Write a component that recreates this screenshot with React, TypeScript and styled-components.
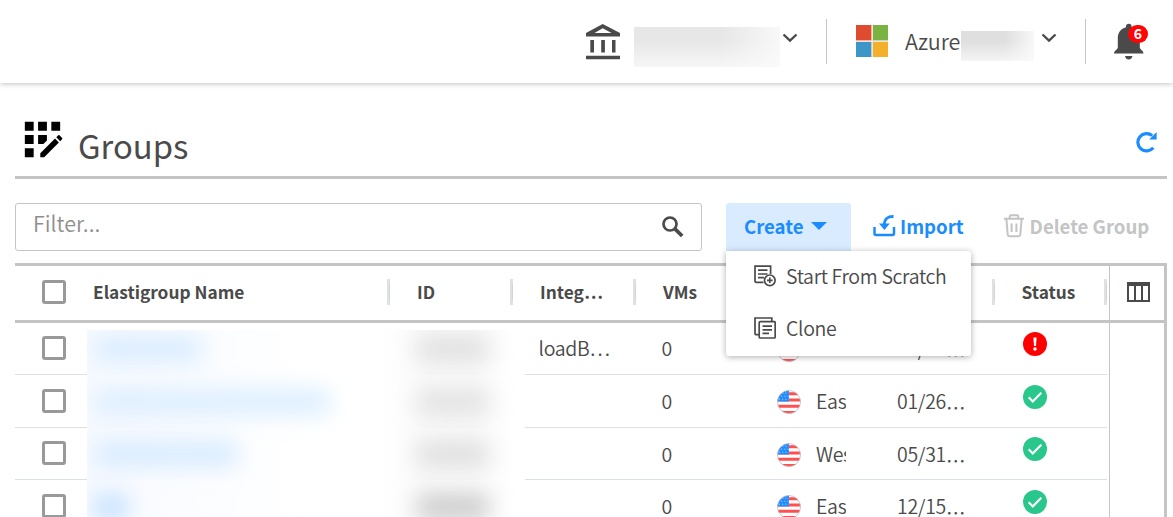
import React from 'react';
import styled, { createGlobalStyle } from 'styled-components';
import { MdAppRegistration } from 'react-icons/md';

const GlobalStyle = createGlobalStyle`
  * { box-sizing: border-box; }
  body {
    margin: 0;
    background: #fff;
    color: #4a4a4a;
    font-family: "Noto Sans CJK KR", "Noto Sans", sans-serif;
    overflow: hidden;
  }
  svg { display: block; flex: none; }
`;

const Page = styled.div`
  width: 1173px;
  height: 517px;
  overflow: hidden;
  display: flex;
  flex-direction: column;
`;

const TopBar = styled.header`
  flex: none;
  height: 83px;
  padding-right: 25px;
  display: flex;
  justify-content: flex-end;
  align-items: flex-start;
  box-shadow: 0 1px 5px rgba(0, 0, 0, 0.24);
`;

const Organization = styled.div`
  display: flex;
  padding-top: 24px;
  width: 240px;
`;

const Account = styled.div`
  display: flex;
  width: 258px;
  padding: 25px 0 0 29px;
`;

const AccountName = styled.span`
  font-size: 21.5px;
  font-weight: 350;
  line-height: 30px;
  width: 56px;
  margin: 1px 0 0 17px;
  white-space: nowrap;
`;

const HiddenName = styled.span<{ $w: number; $h: number; $ml: number; $mt: number; $tone: string }>`
  flex: none;
  width: ${p => p.$w}px;
  height: ${p => p.$h}px;
  margin: ${p => p.$mt}px 0 0 ${p => p.$ml}px;
  background: linear-gradient(to bottom, transparent 35%, rgba(250, 250, 250, 0.8)),
    linear-gradient(to right, ${p => p.$tone} 60%, #f8f8f8);
`;

const ChevronBox = styled.span<{ $ml: number; $mt: number }>`
  margin: ${p => p.$mt}px 0 0 ${p => p.$ml}px;
`;

const Divider = styled.div`
  width: 1px;
  height: 45px;
  margin-top: 19px;
  background: #c4c4c4;
`;

const Notifications = styled.div`
  position: relative;
  padding-top: 23px;
  margin-left: 28px;
  width: 34px;
`;

const Badge = styled.span`
  position: absolute;
  left: 14px;
  top: 25px;
  width: 20px;
  height: 18px;
  border-radius: 9px;
  background: #ff0505;
  color: #fff;
  font-size: 14px;
  font-weight: 700;
  line-height: 17px;
  text-align: center;
`;

const Content = styled.main`
  flex: 1;
  padding: 37px 6px 0 15px;
  display: flex;
  flex-direction: column;
`;

const TitleBar = styled.div`
  flex: none;
  height: 59px;
  border-bottom: 3px solid #c4c4c4;
  display: flex;
  align-items: flex-start;
  padding: 0 9px 0 1px;
`;

const TitleIcon = styled.span`
  color: #000;
  margin-top: -7px;
  width: 53px;
`;

const Title = styled.h1`
  flex: 1;
  margin: 1px 0 0 9px;
  font-size: 32.8px;
  font-weight: 400;
  line-height: 48px;
`;

const RefreshBox = styled.span`
  margin-top: 11px;
`;

const Toolbar = styled.div`
  flex: none;
  display: flex;
  margin-top: 24px;
  height: 48px;
`;

const Filter = styled.div`
  width: 687px;
  border: 1px solid #c4c4c4;
  border-radius: 3px;
  display: flex;
  justify-content: space-between;
  padding: 0 17px;
  color: #8f8f8f;
  font-size: 21.5px;
  font-weight: 350;
  line-height: 37px;
`;

const SearchBox = styled.span`
  padding-top: 12px;
`;

const CreateMenu = styled.div`
  position: relative;
  width: 125px;
  margin-left: 24px;
`;

const Action = styled.button<{ $color: string; $active?: boolean; $pl?: number; $gap: number }>`
  width: ${p => (p.$active ? '100%' : 'auto')};
  height: 48px;
  border: 0;
  padding: 0 0 2px ${p => p.$pl ?? 0}px;
  border-radius: 3px 3px 0 0;
  display: flex;
  align-items: center;
  gap: ${p => p.$gap}px;
  background: ${p => (p.$active ? '#d9ecff' : 'transparent')};
  color: ${p => p.$color};
  font: 700 18.6px/30px "Noto Sans CJK KR", sans-serif;
  white-space: nowrap;
`;

const Dropdown = styled.div`
  position: absolute;
  z-index: 2;
  left: 0;
  top: 48px;
  width: 245px;
  height: 105px;
  background: #fff;
  border-radius: 0 3px 3px 3px;
  box-shadow: 0 1px 6px rgba(0, 0, 0, 0.32);
`;

const MenuItem = styled.div`
  height: 52px;
  padding: 0 0 3px 28px;
  display: flex;
  align-items: center;
  gap: 10px;
  font-size: 19.5px;
  font-weight: 350;
  line-height: 30px;
  letter-spacing: -0.33px;
  white-space: nowrap;
`;

const Table = styled.section`
  flex: none;
  margin-top: 12px;
  width: 1152px;
  border-top: 3px solid #c4c4c4;
  border-right: 3px solid #c4c4c4;
`;

const TableHead = styled.div`
  display: flex;
  height: 57px;
  border-bottom: 3px solid #c4c4c4;
`;

const HeadCell = styled.div<{ $w: number; $pl: number; $handle?: boolean }>`
  flex: none;
  width: ${p => p.$w}px;
  padding: 0 0 ${p => (p.$handle ? 0 : 2)}px ${p => p.$pl}px;
  display: flex;
  align-items: center;
  justify-content: space-between;
  font-size: 17.3px;
  font-weight: 700;
  line-height: 26px;
  white-space: nowrap;
  &::after {
    content: '';
    display: ${p => (p.$handle ? 'block' : 'none')};
    width: 3px;
    height: 26px;
    margin: 0 0 2px auto;
    background: linear-gradient(#d2d5d9, #d2d5d9) 2px 5px / 1px 16px no-repeat, #e0e1e3;
  }
`;

const HeadText = styled.span`
  padding-bottom: 3px;
`;

const ColumnPicker = styled.div`
  flex: 1;
  margin-left: 2px;
  border-left: 1px solid #c4c4c4;
  padding: 16px 0 0 17px;
`;

const TableBody = styled.div`
  display: flex;
  height: 211px;
`;

const SideColumn = styled.div`
  flex: 1;
  margin-left: 2px;
  border-left: 1px solid #c4c4c4;
`;

const Row = styled.div<{ $h: number }>`
  display: flex;
  height: ${p => p.$h}px;
`;

const Cell = styled.div<{ $w: number; $pl: number; $pb?: number }>`
  flex: none;
  width: ${p => p.$w}px;
  padding: 0 0 ${p => p.$pb ?? 0}px ${p => p.$pl}px;
  display: flex;
  align-items: center;
  border-bottom: 1px solid #dcdfe9;
  font-size: 19.5px;
  font-weight: 350;
  line-height: 30px;
  letter-spacing: -0.3px;
  white-space: nowrap;
`;

const CheckBox = styled.span`
  width: 24px;
  height: 24px;
  border: 3px solid #999;
  border-radius: 3px;
`;

const FlagBox = styled.span`
  margin-top: 2px;
`;

const RegionName = styled.span<{ $raise: number }>`
  margin: 0 0 ${p => p.$raise}px 15px;
  width: 30px;
  overflow: hidden;
`;

/* Brings the full-width ellipsis after digits down to the baseline. */
const Ellipsis = styled.span`
  vertical-align: -7px;
  line-height: 0;
`;

const HiddenCell = styled.div<{ $first: boolean }>`
  flex: none;
  width: 438px;
  display: flex;
  align-items: center;
  clip-path: inset(${p => (p.$first ? '7px' : '-24px')} 0 -24px 0);
  background: linear-gradient(to right, #f7faff, rgba(255, 255, 255, 0) 50%),
    linear-gradient(to right, transparent 67%, #fafafa 77%, #fafafa 88%, transparent 98%);
`;

const Smudge = styled.span<{ $w: number; $ml: number; $color: string }>`
  flex: none;
  width: ${p => p.$w}px;
  height: 26px;
  margin-left: ${p => p.$ml}px;
  border-radius: 8px;
  background: ${p => p.$color};
  filter: blur(11px);
`;

const Chevron = () => (
  <svg width="16" height="10" viewBox="0 0 16 10">
    <path d="M1.500 1.500 8 7.700l6.500-6.200" fill="none" stroke="#4a4a4a" strokeWidth="2.300" />
  </svg>
);

const BankIcon = () => (
  <svg width="34" height="36" viewBox="0 0 34 36" fill="#4a4a4a">
    <path fillRule="evenodd" d="M0 12.500V9L16.700 0 34 9v3.500ZM8.500 9h17L16.700 4.300Z" />
    <path d="M4.300 16h3.700v12.500H4.300ZM15.200 16h3.700v12.500h-3.700ZM26 16h3.500v12.500H26ZM0 31.800h34v3.400H0Z" />
  </svg>
);

const WindowsLogo = () => (
  <svg width="32" height="32" viewBox="0 0 32 32">
    <path fill="#f4e3dc" d="M0 0h32v32H0Z" />
    <path fill="#df4b2e" d="M0 0h15.300v15.300H0Z" />
    <path fill="#79b342" d="M17 0h15v15.300H17Z" />
    <path fill="#3c96c7" d="M0 17h15.300v15H0Z" />
    <path fill="#f3b12b" d="M17 17h15v15H17Z" />
  </svg>
);

const BellIcon = () => (
  <svg width="30" height="38" viewBox="0 0 30 38" fill="#4a4a4a">
    <path d="M12 3.500a2.800 2.800 0 0 1 5.600 0v.7C23 5.600 25.800 10 25.800 15v9.500c0 2 3.700 3 3.700 6H0c0-3 3.800-4 3.800-6V15C3.800 10 6.600 5.600 12 4.200ZM11 33h7.500c-.5 2.300-2 3.600-3.800 3.600S11.500 35.300 11 33Z" />
  </svg>
);

const RefreshIcon = () => (
  <svg width="22" height="22" viewBox="0 0 22 22">
    <path d="M17.300 16.800A8.700 8.700 0 1 1 16.200 4.600" fill="none" stroke="#1a8cff" strokeWidth="3.200" />
    <path d="M20.600 1v7.600h-7.400Z" fill="#1a8cff" />
  </svg>
);

const SearchIcon = () => (
  <svg width="22" height="22" viewBox="0 0 22 22" fill="none" stroke="#4a4a4a">
    <circle cx="8" cy="8" r="6.500" strokeWidth="2.700" />
    <path d="m13.200 13.200 7 6.800" strokeWidth="3.800" />
  </svg>
);

const ImportIcon = () => (
  <svg width="23" height="22" viewBox="0 0 23 22">
    <path d="M1.500 12v6.500q0 1.500 1.500 1.500h16.500q1.500 0 1.500-1.500V12" fill="none" stroke="#1a8cff" strokeWidth="2.500" />
    <path d="M20.500 1.500C15 1.300 11.400 3.500 11.300 10" fill="none" stroke="#1a8cff" strokeWidth="2.800" />
    <path d="M6 8.500h10.800l-5.400 6.500Z" fill="#1a8cff" />
  </svg>
);

const TrashIcon = () => (
  <svg width="20" height="24" viewBox="0 0 20 24" fill="none" stroke="#c4c4c4" strokeWidth="2">
    <path d="M0 4.800h20M5.800 4.500V2.200q0-1 1-1h6.400q1 0 1 1v2.300M2.400 5l1.300 15.500q.2 1.800 2 1.800h8.600q1.800 0 2-1.800L17.600 5M7.600 9.500v8.500M12.400 9.500v8.500" />
  </svg>
);

const ScratchIcon = () => (
  <svg width="22" height="22" viewBox="0 0 22 22" fill="none" stroke="#4a4a4a" strokeWidth="1.700">
    <path d="M9.500 17.300H2.300q-1.300 0-1.300-1.300V1.200h15.600V9M4 5.200h9.500M4 9h9.500M4 12.700h6" />
    <circle cx="15.800" cy="15.300" r="5.300" />
    <path d="M15.800 12.500v5.600M13 15.300h5.600" />
  </svg>
);

const CloneIcon = () => (
  <svg width="22" height="22" viewBox="0 0 22 22" fill="none" stroke="#4a4a4a" strokeWidth="1.700">
    <path d="M5 17.700H2.300q-1.300 0-1.300-1.300V1h16.800v3.500" />
    <rect x="5.200" y="4.700" width="16" height="16.300" rx="1" />
    <path d="M8.500 9.200H18M8.500 12.800H18M8.500 16.400h6.500" />
  </svg>
);

const ColumnsIcon = () => (
  <svg width="23" height="20" viewBox="0 0 23 20">
    <path fill="#4a4a4a" fillRule="evenodd" d="M0 0h23v20H0ZM2 4v14h5V4ZM9 4v14h5V4ZM16 4v14h5V4Z" />
  </svg>
);

const FlagIcon = () => (
  <svg width="24" height="24" viewBox="0 0 24 24">
    <defs>
      <clipPath id="disc"><circle cx="12" cy="12" r="11.500" /></clipPath>
    </defs>
    <g clipPath="url(#disc)">
      <path fill="#fff" d="M0 0h24v24H0Z" />
      <path stroke="#ff5050" strokeWidth="2.900" d="M0 3.800h24M0 10h24M0 16.300h24M0 22.400h24" />
      <path fill="#1f8dff" d="M0 0h12v11.500H0Z" />
      <path stroke="#b9dcff" strokeWidth="1" strokeDasharray="1 2.200" d="M2 3.200h10M1 6.200h11M2 9.200h10" />
    </g>
    <circle cx="12" cy="12" r="11.500" fill="none" stroke="#b9bcc4" strokeWidth=".8" />
  </svg>
);

const OkIcon = () => (
  <svg width="24" height="24" viewBox="0 0 24 24">
    <circle cx="12" cy="12" r="12" fill="#29c78b" />
    <path d="m5.700 12.300 4.100 4.200 8.500-8.800" fill="none" stroke="#fff" strokeWidth="2.200" />
  </svg>
);

const ErrorIcon = () => (
  <svg width="24" height="24" viewBox="0 0 24 24">
    <circle cx="12" cy="12" r="12" fill="#f00" />
    <path d="M10.400 5.500h3.200l-.6 8.500h-2Z" fill="#fff" />
    <circle cx="12" cy="17" r="1.800" fill="#fff" />
  </svg>
);

const rows = [
  { integration: 'loadB…', region: 'Eas', date: '01/26', ok: false, name: 108, tone: '#d9ecff', idTone: '#e0e0e0' },
  { integration: '', region: 'Eas', date: '01/26', ok: true, name: 236, tone: '#dceeff', idTone: '#e2e2e2' },
  { integration: '', region: 'West', date: '05/31', ok: true, name: 144, tone: '#d8ebff', idTone: '#dfdfdf' },
  { integration: '', region: 'Eas', date: '12/15', ok: true, name: 34, tone: '#c4e0ff', idTone: '#cccccc' },
];

export default function App() {
  return (
    <Page lang="en">
      <GlobalStyle />
      <TopBar>
        <Organization>
          <BankIcon />
          <HiddenName $w={146} $h={40} $ml={14} $mt={3} $tone="#e7e7e7" />
          <ChevronBox $ml={2} $mt={9}><Chevron /></ChevronBox>
        </Organization>
        <Divider />
        <Account>
          <WindowsLogo />
          <AccountName>Azure</AccountName>
          <HiddenName $w={73} $h={30} $ml={0} $mt={6} $tone="#dfdfdf" />
          <ChevronBox $ml={7} $mt={8}><Chevron /></ChevronBox>
        </Account>
        <Divider />
        <Notifications>
          <BellIcon />
          <Badge>6</Badge>
        </Notifications>
      </TopBar>

      <Content>
        <TitleBar>
          <TitleIcon><MdAppRegistration size={53} /></TitleIcon>
          <Title>Groups</Title>
          <RefreshBox><RefreshIcon /></RefreshBox>
        </TitleBar>

        <Toolbar>
          <Filter>
            Filter...
            <SearchBox><SearchIcon /></SearchBox>
          </Filter>
          <CreateMenu>
            <Action $color="#1a8cff" $active $pl={18} $gap={7}>
              Create
              <svg width="16" height="8" viewBox="0 0 16 8"><path d="M0 0h16L8 8Z" fill="#1a8cff" /></svg>
            </Action>
            <Dropdown>
              <MenuItem><ScratchIcon />Start From Scratch</MenuItem>
              <MenuItem><CloneIcon />Clone</MenuItem>
            </Dropdown>
          </CreateMenu>
          <Action $color="#1a8cff" $pl={22} $gap={4}><ImportIcon />Import</Action>
          <Action $color="#c4c4c4" $pl={40} $gap={6}><TrashIcon />Delete Group</Action>
        </Toolbar>

        <Table>
          <TableHead>
            <HeadCell $w={72} $pl={27}><CheckBox /></HeadCell>
            <HeadCell $w={303} $pl={6} $handle><HeadText>Elastigroup Name</HeadText></HeadCell>
            <HeadCell $w={123} $pl={27} $handle><HeadText>ID</HeadText></HeadCell>
            <HeadCell $w={123} $pl={27} $handle><HeadText>Integ…</HeadText></HeadCell>
            <HeadCell $w={123} $pl={27} $handle><HeadText>VMs</HeadText></HeadCell>
            <HeadCell $w={111} $pl={27} $handle />
            <HeadCell $w={125} $pl={27} $handle />
            <HeadCell $w={112} $pl={26.5} $handle><HeadText>Status</HeadText></HeadCell>
            <ColumnPicker><ColumnsIcon /></ColumnPicker>
          </TableHead>
          <TableBody>
            <div>
              {rows.map((row, i) => {
                const textPad = i === 0 ? 2 : 0;
                return (
                  <Row key={i} $h={i % 2 ? 53 : 52}>
                    <Cell $w={72} $pl={27} $pb={i % 2 ? 0 : 1}><CheckBox /></Cell>
                    <HiddenCell $first={i === 0}>
                      <Smudge $w={row.name} $ml={7} $color={row.tone} />
                      <Smudge $w={72} $ml={323 - row.name} $color={row.idTone} />
                    </HiddenCell>
                    <Cell $w={111} $pl={13.5} $pb={textPad}>{row.integration}</Cell>
                    <Cell $w={123} $pl={25.5} $pb={textPad}>0</Cell>
                    <Cell $w={111} $pl={18}>
                      <FlagBox><FlagIcon /></FlagBox>
                      <RegionName $raise={textPad * 2}>{row.region}</RegionName>
                    </Cell>
                    <Cell $w={125} $pl={27} $pb={textPad}>
                      <span>{row.date}<Ellipsis>…</Ellipsis></span>
                    </Cell>
                    <Cell $w={112} $pl={28} $pb={9}>{row.ok ? <OkIcon /> : <ErrorIcon />}</Cell>
                  </Row>
                );
              })}
            </div>
            <SideColumn />
          </TableBody>
        </Table>
      </Content>
    </Page>
  );
}
